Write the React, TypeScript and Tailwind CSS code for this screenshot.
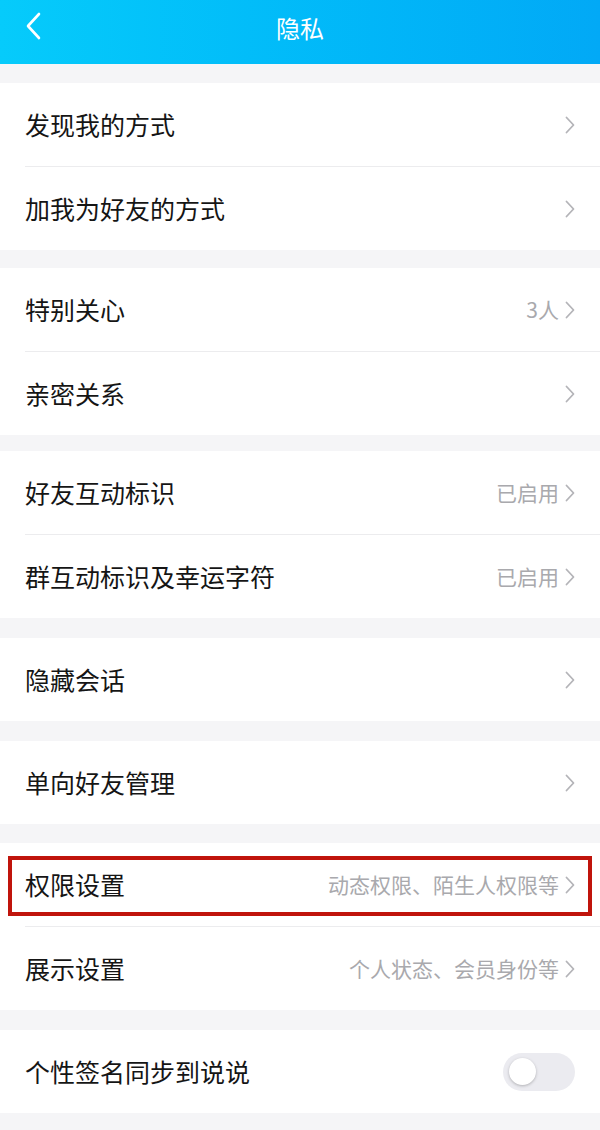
import React from "react";

type Row = {
  label: string;
  value?: string;
  toggle?: boolean;
  boxed?: boolean;
};

const sections: { rows: Row[]; gap: string }[] = [
  { gap: "h-[19px]", rows: [{ label: "发现我的方式" }, { label: "加我为好友的方式" }] },
  { gap: "h-[18px]", rows: [{ label: "特别关心", value: "3人" }, { label: "亲密关系" }] },
  {
    gap: "h-[16px]",
    rows: [
      { label: "好友互动标识", value: "已启用" },
      { label: "群互动标识及幸运字符", value: "已启用" },
    ],
  },
  { gap: "h-[20px]", rows: [{ label: "隐藏会话" }] },
  { gap: "h-[20px]", rows: [{ label: "单向好友管理" }] },
  {
    gap: "h-[19px]",
    rows: [
      { label: "权限设置", value: "动态权限、陌生人权限等", boxed: true },
      { label: "展示设置", value: "个人状态、会员身份等" },
    ],
  },
  { gap: "h-[20px]", rows: [{ label: "个性签名同步到说说", toggle: true }] },
];

const Chevron = () => (
  <svg width="12" height="18" viewBox="0 0 12 18" fill="none" className="ml-[5px]">
    <path d="M2.5 1.5 L9.5 9 L2.5 16.5" stroke="#b4b4b8" strokeWidth="1.8" strokeLinecap="round" strokeLinejoin="round" />
  </svg>
);

const Toggle = () => (
  <div className="w-[72px] h-[38px] rounded-full bg-[#ebebf0] flex items-center px-[6px] mr-[1px]">
    <div className="w-[27px] h-[27px] rounded-full bg-white shadow-[0_1px_3px_rgba(0,0,0,0.25)]" />
  </div>
);

const SettingRow = ({ row, last }: { row: Row; last: boolean }) => (
  <div className="relative">
    <div className="h-[83px] flex items-center pl-[25px] pr-[24px]">
      <span className="text-[25px] text-[#151515] flex-1">{row.label}</span>
      {row.value && <span className="text-[21px] text-[#a9a9ad]">{row.value}</span>}
      {row.toggle ? <Toggle /> : <Chevron />}
    </div>
    {!last && <div className="ml-[25px] h-px bg-[#ececee]" />}
    {row.boxed && (
      <div className="absolute left-[8px] right-[8px] top-[13px] h-[60px] border-[4px] border-[#c0140c]" />
    )}
  </div>
);

export default function App() {
  return (
    <div
      className="w-[600px] h-[1130px] overflow-hidden bg-[#f5f5f7]"
      style={{ fontFamily: '"Noto Sans CJK SC", "Noto Sans", sans-serif' }}
    >
      <div className="h-[64px] bg-gradient-to-r from-[#06cbfb] to-[#02a9f6] flex items-center justify-center relative">
        <svg width="16" height="28" viewBox="0 0 16 28" fill="none" className="absolute left-[25px] top-[12px]">
          <path d="M14 2 L3 14 L14 26" stroke="white" strokeWidth="2.6" strokeLinecap="round" strokeLinejoin="round" />
        </svg>
        <span className="text-white text-[24px] -mt-[8px]">隐私</span>
      </div>
      {sections.map((s, i) => (
        <div key={i}>
          <div className={s.gap} />
          <div className="bg-white">
            {s.rows.map((r, j) => (
              <SettingRow key={r.label} row={r} last={j === s.rows.length - 1} />
            ))}
          </div>
        </div>
      ))}
    </div>
  );
}
